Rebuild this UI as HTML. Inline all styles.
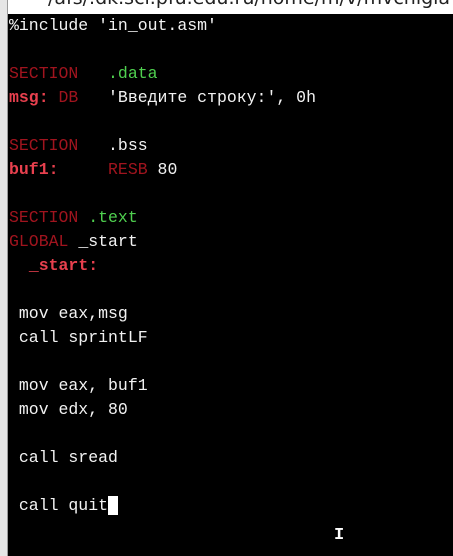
<!DOCTYPE html>
<html><head><meta charset="utf-8"><style>
html,body{margin:0;padding:0;width:453px;height:556px;overflow:hidden;background:#000}
#strip{position:absolute;left:0;top:0;width:7px;height:556px;background:#e6e6e6;border-right:1px solid #9a9a9a}
#top{position:absolute;left:8px;top:0;width:445px;height:14px;background:#fff;overflow:hidden}
#top span{position:absolute;left:40px;top:-13px;font:19px "DejaVu Sans",sans-serif;color:#222;white-space:pre}
#code{position:absolute;left:9px;top:14px;margin:0;font:16.5px/24px "Liberation Mono","DejaVu Sans Mono",monospace;color:#f2f2f2;white-space:pre}
.k{color:#a0141e}.g{color:#4fd04f}.r{color:#e8404e;font-weight:bold}
.cur{background:#fff;color:#fff}
#ibeam{position:absolute;left:334px;top:526px;font:bold 17px "Liberation Mono",monospace;color:#fff}
</style></head><body>
<div id="strip"></div>
<div id="top"><span>/afs/.dk.sci.pfu.edu.ru/home/m/v/mvchigla</span></div>
<pre id="code">%include 'in_out.asm'

<span class="k">SECTION</span>   <span class="g">.data</span>
<span class="r">msg:</span> <span class="k">DB</span>   'Введите строку:', 0h

<span class="k">SECTION</span>   .bss
<span class="r">buf1:</span>     <span class="k">RESB</span> 80

<span class="k">SECTION</span> <span class="g">.text</span>
<span class="k">GLOBAL</span> _start
  <span class="r">_start:</span>

 mov eax,msg
 call sprintLF

 mov eax, buf1
 mov edx, 80

 call sread

 call quit<span class="cur"> </span></pre>
<div id="ibeam">I</div>
</body></html>
